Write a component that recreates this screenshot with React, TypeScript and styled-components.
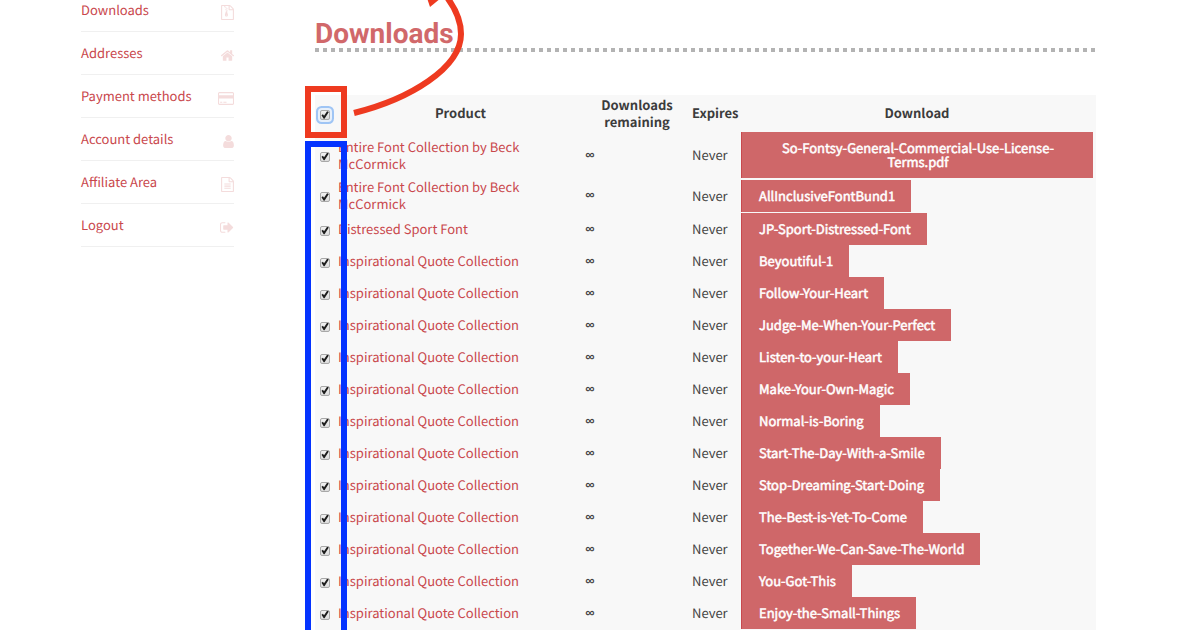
import React from 'react';
import styled, { createGlobalStyle } from 'styled-components';

const GlobalStyle = createGlobalStyle`
  *, *::before, *::after { box-sizing: border-box; }
  body {
    margin: 0;
    background: #fff;
    color: #444;
    font-family: 'Noto Sans CJK SC', 'Open Sans', sans-serif;
    font-size: 13px;
    line-height: 17px;
    text-rendering: geometricPrecision;
  }
`;

const Page = styled.div`
  display: flex;
  gap: 81px;
  min-height: 100vh;
  padding: 0 104px 0 81px;
  overflow: hidden;
`;

const Sidebar = styled.nav`
  flex: 0 0 153px;
  margin-top: -11px;
`;

const MenuList = styled.ul`
  list-style: none;
  margin: 0;
  padding: 0;
`;

const MenuItem = styled.li`
  height: 43px;
  border-bottom: 1px solid #f0f0f0;
`;

const MenuLink = styled.a`
  display: flex;
  align-items: center;
  justify-content: space-between;
  height: 42px;
  padding-bottom: 2px;
  color: #c9474c;
  text-decoration: none;

  svg {
    display: block;
    margin-top: 6px;
    fill: #f4dcdc;
  }
`;

const Main = styled.main`
  flex: 1;
  min-width: 0;
  position: relative;
  display: flex;
  flex-direction: column;
`;

const Title = styled.h1`
  margin: 0 0 43px;
  padding-top: 17px;
  height: 52px;
  color: #d1686a;
  font: 700 28px/34px Roboto, sans-serif;
  background: repeating-linear-gradient(90deg, #b3b3b3 0 4px, transparent 4px 8px) left bottom / 100% 4px no-repeat;
`;

const TablePanel = styled.div`
  position: relative;
  flex: 1;
  background: #f8f8f8;
`;

const Table = styled.table`
  width: 100%;
  table-layout: fixed;
  border-collapse: collapse;
`;

const Col = styled.col<{ $width?: number }>`
  width: ${({ $width }) => ($width ? `${$width}px` : 'auto')};
`;

const Row = styled.tr<{ $height: number }>`
  height: ${({ $height }) => $height}px;
`;

const HeadCell = styled.th`
  padding: 0 1px 2px;
  color: #3c3c3c;
  font-weight: 700;
  text-align: center;
  vertical-align: middle;
`;

const ExpiresHead = styled(HeadCell)`
  padding: 0 2px 2px;
`;

const DownloadHead = styled(HeadCell)`
  padding: 0 3px 2px 1px;
`;

const Cell = styled.td`
  padding: 0 1px 1px;
  vertical-align: middle;
`;

const CheckCell = styled(Cell)`
  padding: 3px 0 0 5px;
`;

const CheckHead = styled(HeadCell)`
  padding: 3px 0 0 5px;
  text-align: left;
`;

const ExpiresCell = styled(Cell)`
  padding: 0 2px 1px;
`;

const DownloadCell = styled(Cell)`
  padding: 0 3px 0 1px;
`;

const Infinite = styled.span`
  font-family: 'Open Sans', sans-serif;
  font-size: 14px;
  font-weight: 600;
`;

const Checkbox = styled.input<{ $focused?: boolean }>`
  appearance: none;
  display: block;
  position: relative;
  width: 10px;
  height: 10px;
  margin: 0;
  border: 1px solid #a9a9a9;
  border-radius: 2px;
  background: linear-gradient(#f2f2f2, #dcdcdc);
  box-shadow: ${({ $focused }) => ($focused ? '0 0 0 2px #e8f0fa, 0 0 0 4px #9fc5f5' : 'none')};

  &:checked::after {
    content: '';
    position: absolute;
    inset: 0;
    background: #1d1d1d;
    clip-path: polygon(6% 52%, 24% 40%, 38% 58%, 76% 4%, 98% 14%, 44% 96%, 34% 96%);
  }
`;

const ProductLink = styled.a`
  display: block;
  max-width: 190px;
  color: #c9474c;
  text-decoration: none;
`;

const DownloadButton = styled.a`
  display: block;
  width: fit-content;
  padding: 9px 16px 9px 17px;
  border-left: 1px solid #c8494e;
  background: #cf6769;
  color: #fff;
  -webkit-text-stroke: 0.5px #fff;
  line-height: 14px;
  text-align: center;
  text-decoration: none;
`;

const Frame = styled.div<{ $color: string }>`
  position: absolute;
  left: -10px;
  width: 42px;
  border: 6px solid ${({ $color }) => $color};
  pointer-events: none;
`;

const HeaderFrame = styled(Frame)`
  top: -9px;
  height: 52px;
`;

const RowsFrame = styled(Frame)`
  top: 46px;
  bottom: 0;
  border-bottom: 0;
`;

const Arrow = styled.svg`
  position: absolute;
  top: 0;
  left: 30px;
  pointer-events: none;
`;

const menu = [
  {
    label: 'Downloads',
    icon: (
      <svg width="13" height="15" viewBox="128 0 1536 1792">
        <path d="M1596 380q28 28 48 76t20 88v1152q0 40-28 68t-68 28h-1344q-40 0-68-28t-28-68v-1600q0-40 28-68t68-28h896q40 0 88 20t76 48zm-444-244v376h376q-10-29-22-41l-313-313q-12-12-41-22zm384 1528v-1024h-416q-40 0-68-28t-28-68v-416h-384v128h-128v-128h-256v1536h1280z" />
        <path d="M640 256h128v128h-128zM768 384h128v128h-128zM640 512h128v128h-128zM768 640h128v128h-128zM690 768h140l110 360q10 40 10 72 0 80-54 130t-128 50-128-50-54-130q0-32 10-72zM768 1150q-54 0-54 50t54 50 54-50-54-50z" fillRule="evenodd" />
      </svg>
    ),
  },
  {
    label: 'Addresses',
    icon: (
      <svg width="13" height="15" viewBox="96 0 1600 1792">
        <path d="M1472 992v480q0 26-19 45t-45 19h-384v-384h-256v384h-384q-26 0-45-19t-19-45v-480q0-1 .5-3t.5-3l575-474 575 474q1 2 1 6zm223-69l-62 74q-8 9-21 11h-3q-13 0-21-7l-692-577-692 577q-12 8-24 7-13-2-21-11l-62-74q-8-10-7-23.5t11-21.5l719-599q32-26 76-26t76 26l244 204v-195q0-14 9-23t23-9h192q14 0 23 9t9 23v408l219 182q10 8 11 21.5t-7 23.5z" />
      </svg>
    ),
  },
  {
    label: 'Payment methods',
    icon: (
      <svg width="16" height="15" viewBox="0 0 1920 1792">
        <path d="M1760 128q66 0 113 47t47 113v1216q0 66-47 113t-113 47h-1600q-66 0-113-47t-47-113v-1216q0-66 47-113t113-47h1600zm-1600 128q-13 0-22.500 9.500t-9.500 22.500v224h1664v-224q0-13-9.500-22.500t-22.500-9.500h-1600zm1600 1280q13 0 22.500-9.500t9.500-22.500v-608h-1664v608q0 13 9.500 22.500t22.500 9.500h1600zm-1504-128v-128h256v128h-256zm384 0v-128h384v128h-384z" />
      </svg>
    ),
  },
  {
    label: 'Account details',
    icon: (
      <svg width="11" height="15" viewBox="256 0 1280 1792">
        <path d="M1536 1399q0 109-62.500 187t-150.500 78h-854q-88 0-150.500-78t-62.500-187q0-85 8.500-160.500t31.500-152 58.500-131 94-89 134.500-34.500q131 128 313 128t313-128q76 0 134.500 34.500t94 89 58.500 131 31.500 152 8.500 160.500zm-256-887q0 159-112.500 271.500t-271.500 112.500-271.500-112.500-112.500-271.500 112.500-271.500 271.500-112.500 271.500 112.500 112.500 271.500z" />
      </svg>
    ),
  },
  {
    label: 'Affiliate Area',
    icon: (
      <svg width="13" height="15" viewBox="128 0 1536 1792">
        <path d="M1596 380q28 28 48 76t20 88v1152q0 40-28 68t-68 28h-1344q-40 0-68-28t-28-68v-1600q0-40 28-68t68-28h896q40 0 88 20t76 48zm-444-244v376h376q-10-29-22-41l-313-313q-12-12-41-22zm384 1528v-1024h-416q-40 0-68-28t-28-68v-416h-768v1536h1280zm-1024-864q0-14 9-23t23-9h704q14 0 23 9t9 23v64q0 14-9 23t-23 9h-704q-14 0-23-9t-9-23v-64zm736 224q14 0 23 9t9 23v64q0 14-9 23t-23 9h-704q-14 0-23-9t-9-23v-64q0-14 9-23t23-9h704zm0 256q14 0 23 9t9 23v64q0 14-9 23t-23 9h-704q-14 0-23-9t-9-23v-64q0-14 9-23t23-9h704z" />
      </svg>
    ),
  },
  {
    label: 'Logout',
    icon: (
      <svg width="14" height="15" viewBox="64 0 1672 1792">
        <path d="M704 1440q0 4 1 20t.5 26.500-3 23.500-10 19.500-20.500 6.500h-320q-119 0-203.500-84.500t-84.500-203.500v-704q0-119 84.500-203.500t203.500-84.500h320q13 0 22.500 9.500t9.500 22.500q0 4 1 20t.5 26.500-3 23.500-10 19.500-20.500 6.500h-320q-66 0-113 47t-47 113v704q0 66 47 113t113 47h312l11.500 1 11.500 3 8 5.500 7 9 2 13.500zm928-544q0 26-19 45l-544 544q-19 19-45 19t-45-19-19-45v-288h-448q-26 0-45-19t-19-45v-384q0-26 19-45t45-19h448v-288q0-26 19-45t45-19 45 19l544 544q19 19 19 45z" />
      </svg>
    ),
  },
];

const bundle = 'Entire Font Collection by Beck McCormick';
const quotes = 'Inspirational Quote Collection';

const downloads = [
  { product: bundle, file: 'So-Fontsy-General-Commercial-Use-License-Terms.pdf', height: 46 },
  { product: bundle, file: 'AllInclusiveFontBund1', height: 35 },
  { product: 'Distressed Sport Font', file: 'JP-Sport-Distressed-Font', height: 32 },
  ...[
    'Beyoutiful-1',
    'Follow-Your-Heart',
    'Judge-Me-When-Your-Perfect',
    'Listen-to-your-Heart',
    'Make-Your-Own-Magic',
    'Normal-is-Boring',
    'Start-The-Day-With-a-Smile',
    'Stop-Dreaming-Start-Doing',
    'The-Best-is-Yet-To-Come',
    'Together-We-Can-Save-The-World',
    'You-Got-This',
    'Enjoy-the-Small-Things',
  ].map((file) => ({ product: quotes, file, height: 32 })),
];

export default function App() {
  return (
    <>
      <GlobalStyle />
      <Page>
        <Sidebar aria-label="Account">
          <MenuList>
            {menu.map(({ label, icon }) => (
              <MenuItem key={label}>
                <MenuLink href="#">
                  {label}
                  {icon}
                </MenuLink>
              </MenuItem>
            ))}
          </MenuList>
        </Sidebar>
        <Main>
          <Title>Downloads</Title>
          <TablePanel>
            <Table>
              <colgroup>
                <Col $width={22} />
                <Col $width={247} />
                <Col $width={106} />
                <Col $width={50} />
                <Col />
              </colgroup>
              <thead>
                <Row $height={37}>
                  <CheckHead>
                    <Checkbox type="checkbox" aria-label="Select all" defaultChecked $focused />
                  </CheckHead>
                  <HeadCell>Product</HeadCell>
                  <HeadCell>Downloads remaining</HeadCell>
                  <ExpiresHead>Expires</ExpiresHead>
                  <DownloadHead>Download</DownloadHead>
                </Row>
              </thead>
              <tbody>
                {downloads.map(({ product, file, height }) => (
                  <Row key={file} $height={height}>
                    <CheckCell>
                      <Checkbox type="checkbox" aria-label={file} defaultChecked />
                    </CheckCell>
                    <Cell>
                      <ProductLink href="#">{product}</ProductLink>
                    </Cell>
                    <Cell>
                      <Infinite>∞</Infinite>
                    </Cell>
                    <ExpiresCell>Never</ExpiresCell>
                    <DownloadCell>
                      <DownloadButton href="#">{file}</DownloadButton>
                    </DownloadCell>
                  </Row>
                ))}
              </tbody>
            </Table>
            <RowsFrame $color="#0433ff" />
            <HeaderFrame $color="#ee3a20" />
          </TablePanel>
          <Arrow width="130" height="120" viewBox="345 0 130 120" aria-hidden="true">
            <path d="M354 113C410 99 461 68 461 34C461 20 456 9 446 -4" fill="none" stroke="#ee3a20" strokeWidth="6" />
            <path d="M427 -2L430 7L441 -2Z" fill="#ee3a20" />
          </Arrow>
        </Main>
      </Page>
    </>
  );
}
